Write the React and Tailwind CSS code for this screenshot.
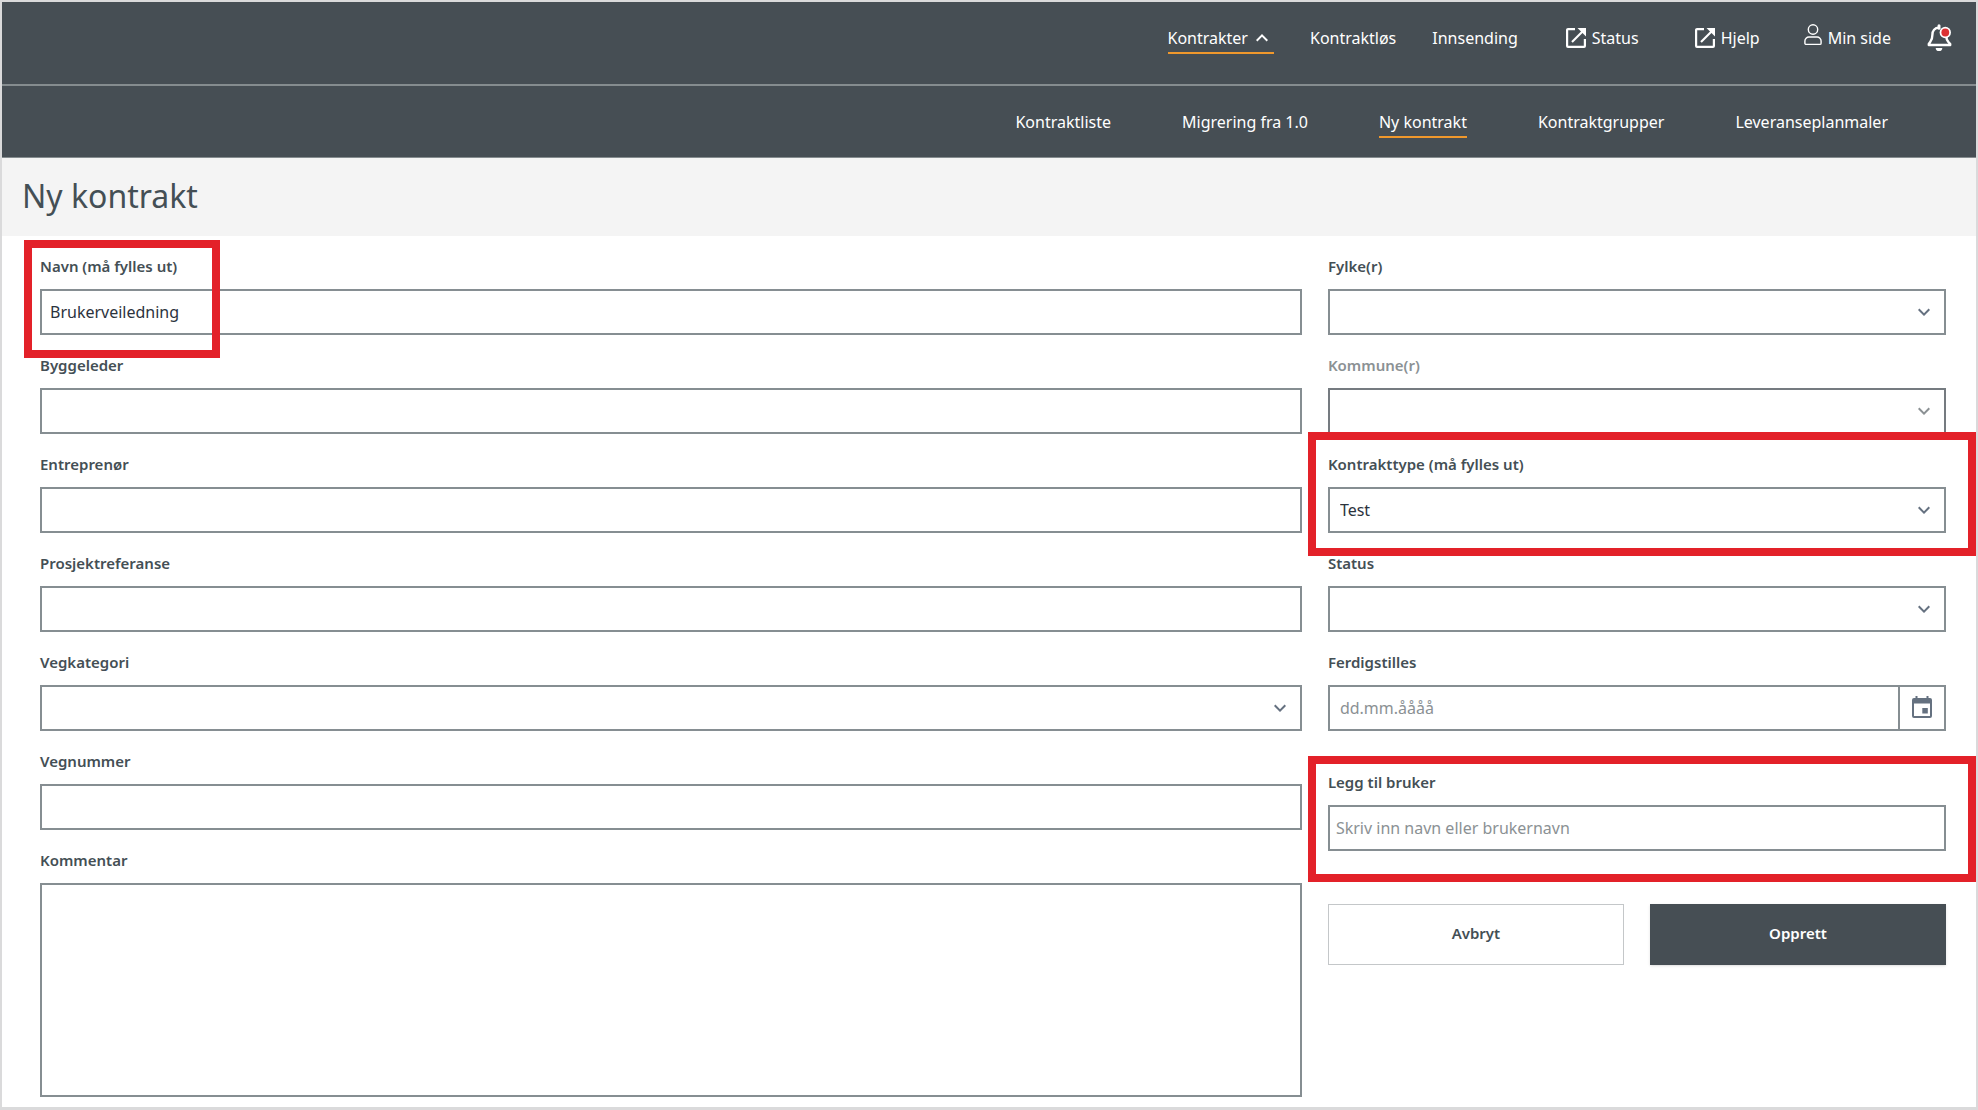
import React from "react";
import { MdKeyboardArrowUp, MdKeyboardArrowDown } from "react-icons/md";

const inputBox = "h-[46px] w-full border-2 border-[#868e92] bg-white text-base text-[#2b333d] placeholder:text-[#8b9194] placeholder:opacity-100";

function ExternalIcon() {
  return (
    <svg width="20" height="20" viewBox="0 0 20 20" fill="none" stroke="currentColor" strokeWidth="2.2" aria-hidden="true">
      <path d="M9 1.100H2a.9.9 0 0 0-.9.9v16a.9.9 0 0 0 .9.9h16a.9.9 0 0 0 .9-.9v-7" />
      <path d="M6 14 16.500 3.500" />
      <path d="M11.500 0H20v8.500z" fill="currentColor" stroke="none" />
    </svg>
  );
}

function PersonIcon() {
  return (
    <svg width="18" height="22" viewBox="0 0 18 22" fill="none" stroke="currentColor" strokeWidth="1.4" aria-hidden="true">
      <circle cx="9" cy="5.5" r="4.7" />
      <path d="M5 13h8a4 4 0 0 1 4.1 4v2.2a1.2 1.2 0 0 1-1.2 1.2H2.1a1.2 1.2 0 0 1-1.2-1.2V17A4 4 0 0 1 5 13z" />
    </svg>
  );
}

function BellIcon() {
  return (
    <svg width="25" height="28" viewBox="0 0 25 28" fill="none" aria-hidden="true">
      <path d="M12 1.7v2.500" stroke="#fff" strokeWidth="3" strokeLinecap="round" />
      <path
        d="M12 3.8c-4.3 0-6.6 3-6.6 7 0 4-.8 5.600-2.200 7.200L1.800 20v1h21.400v-1l-2-2.300c-1-1.300-1.800-2.600-1.900-5.200"
        stroke="#fff"
        strokeWidth="2.400"
        strokeLinejoin="round"
      />
      <path d="M8.700 24h6.600a3.300 3.100 0 0 1-6.600 0z" fill="#fff" />
      <circle cx="18.300" cy="8.500" r="5.700" fill="#fff" />
      <circle cx="18.300" cy="8.500" r="3.900" fill="#dc3133" />
    </svg>
  );
}

function CalendarIcon() {
  return (
    <svg width="20" height="22" viewBox="0 0 20 22" aria-hidden="true">
      <path
        d="M3.500 0h2v2h9V0h2v2H18a2 2 0 0 1 2 2v16a2 2 0 0 1-2 2H2a2 2 0 0 1-2-2V4a2 2 0 0 1 2-2h1.500zM2 7.500V20h16V7.500z"
        fill="#657180"
        fillRule="evenodd"
      />
      <rect x="10.300" y="12" width="5.500" height="5.500" fill="#657180" />
    </svg>
  );
}

function NavLink({ active, children }) {
  return (
    <a
      href="#"
      className={"flex border-b-2 pb-0.5 text-base leading-6 text-white " + (active ? "border-[#f0982c]" : "border-transparent")}
    >
      {children}
    </a>
  );
}

function Highlight({ className }) {
  return <div aria-hidden="true" className={"pointer-events-none absolute z-10 border-8 border-[#e32129] " + className} />;
}

function Field({ id, label, muted, highlight, children }) {
  return (
    <div className="relative">
      <label htmlFor={id} className={"mb-3 block text-[15px] leading-[22px] font-semibold " + (muted ? "text-[#8b9194]" : "text-[#444f55]")}>
        {label}
      </label>
      {children}
      {highlight && <Highlight className={highlight} />}
    </div>
  );
}

function TextField({ id, label, value, highlight }) {
  return (
    <Field id={id} label={label} highlight={highlight}>
      <input id={id} type="text" defaultValue={value} className={inputBox + " block px-2"} />
    </Field>
  );
}

function SelectField({ id, label, value = "", disabled, highlight }) {
  return (
    <Field id={id} label={label} muted={disabled} highlight={highlight}>
      <div className="relative">
        <select
          id={id}
          disabled={disabled}
          defaultValue={value}
          className={inputBox + " block appearance-none px-2.5 opacity-100 disabled:border-[#757b80]"}
        >
          <option value={value}>{value}</option>
        </select>
        <MdKeyboardArrowDown
          size={24}
          className={"pointer-events-none absolute top-[11px] right-2.5 " + (disabled ? "text-[#8b9194]" : "text-[#657180]")}
        />
      </div>
    </Field>
  );
}

export default function App() {
  return (
    <div className="flex min-h-screen flex-col border-2 border-b-4 border-[#dadadb] bg-white font-['Noto_Sans',sans-serif]">
      <header className="bg-[#464e54] text-white">
        <nav className="flex h-[84px] items-start justify-end border-b-2 border-[#858c8f] pt-6 pr-6">
          <div className="mr-9">
            <NavLink active>
              Kontrakter
              <MdKeyboardArrowUp size={24} className="ml-0.5" />
            </NavLink>
          </div>
          <div className="mr-9">
            <NavLink>Kontraktløs</NavLink>
          </div>
          <div className="mr-12">
            <NavLink>Innsending</NavLink>
          </div>
          <div className="mr-14">
            <NavLink>
              <span className="flex items-center gap-1.5">
                <ExternalIcon />
                Status
              </span>
            </NavLink>
          </div>
          <div className="mr-11">
            <NavLink>
              <span className="flex items-center gap-1.5">
                <ExternalIcon />
                Hjelp
              </span>
            </NavLink>
          </div>
          <div className="mr-9">
            <NavLink>
              <span className="flex gap-1.5">
                <span className="-mt-0.5">
                  <PersonIcon />
                </span>
                Min side
              </span>
            </NavLink>
          </div>
          <button type="button" aria-label="Varsler" className="-mt-0.5">
            <BellIcon />
          </button>
        </nav>
        <nav className="flex h-[72px] items-start justify-end gap-[71px] border-b border-[#858c8f] pt-6 pr-22">
          <NavLink>Kontraktliste</NavLink>
          <NavLink>Migrering fra 1.0</NavLink>
          <NavLink active>Ny kontrakt</NavLink>
          <NavLink>Kontraktgrupper</NavLink>
          <NavLink>Leveranseplanmaler</NavLink>
        </nav>
      </header>

      <div className="flex h-[78px] items-center bg-[#f4f4f4] px-5 pb-0.5">
        <h1 className="text-[32px] text-[#444f55]">Ny kontrakt</h1>
      </div>

      <form className="grid grow grid-cols-[49fr_24fr] gap-x-[26px] pt-[19px] pr-[30px] pb-2.5 pl-[38px]">
        <div className="flex flex-col gap-[19px]">
          <TextField id="navn" label="Navn (må fylles ut)" value="Brukerveiledning" highlight="-top-[15px] -left-4 h-[118px] w-[196px]" />
          <TextField id="byggeleder" label="Byggeleder" />
          <TextField id="entreprenor" label="Entreprenør" />
          <TextField id="prosjektreferanse" label="Prosjektreferanse" />
          <SelectField id="vegkategori" label="Vegkategori" />
          <TextField id="vegnummer" label="Vegnummer" />
          <Field id="kommentar" label="Kommentar">
            <textarea id="kommentar" className="block h-[214px] w-full resize-none border-2 border-[#868e92] bg-white p-2 text-base" />
          </Field>
        </div>

        <div className="flex flex-col gap-[19px]">
          <SelectField id="fylke" label="Fylke(r)" />
          <SelectField id="kommune" label="Kommune(r)" disabled />
          <SelectField id="kontrakttype" label="Kontrakttype (må fylles ut)" value="Test" highlight="-top-[21px] -right-[30px] -bottom-[23px] -left-5" />
          <SelectField id="status" label="Status" />
          <Field id="ferdigstilles" label="Ferdigstilles">
            <div className="flex">
              <input id="ferdigstilles" type="text" placeholder="dd.mm.åååå" className={inputBox + " min-w-0 grow px-2.5"} />
              <button type="button" aria-label="Velg dato" className="flex h-[46px] w-[46px] shrink-0 items-center justify-center border-2 border-l-0 border-[#868e92] pb-0.5">
                <CalendarIcon />
              </button>
            </div>
          </Field>
          <div className="mt-[21px]">
            <Field id="bruker" label="Legg til bruker" highlight="-top-[15px] -right-[30px] -bottom-[31px] -left-5">
              <input id="bruker" type="text" placeholder="Skriv inn navn eller brukernavn" className={inputBox + " block px-1.5"} />
            </Field>
          </div>
          <div className="mt-[34px] grid grid-cols-2 gap-[26px] text-[15px] font-semibold">
            <button type="button" className="h-[61px] border border-[#c4c7c9] bg-white pb-0.5 text-[#444f55]">
              Avbryt
            </button>
            <button type="submit" className="h-[61px] bg-[#464e54] pb-0.5 text-white shadow">
              Opprett
            </button>
          </div>
        </div>
      </form>
    </div>
  );
}
